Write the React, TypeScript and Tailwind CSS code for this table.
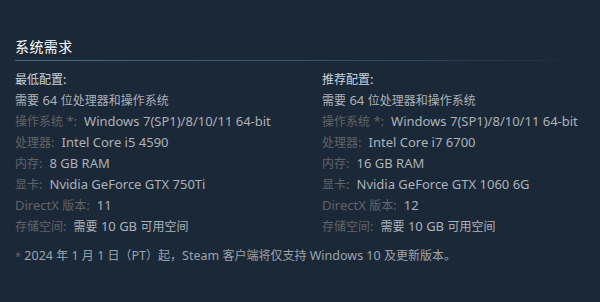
import React from "react";

type Spec = { label: string; value: string };

const minSpecs: Spec[] = [
  { label: "操作系统 *:", value: "Windows 7(SP1)/8/10/11 64-bit" },
  { label: "处理器:", value: "Intel Core i5 4590" },
  { label: "内存:", value: "8 GB RAM" },
  { label: "显卡:", value: "Nvidia GeForce GTX 750Ti" },
  { label: "DirectX 版本:", value: "11" },
  { label: "存储空间:", value: "需要 10 GB 可用空间" },
];

const recSpecs: Spec[] = [
  { label: "操作系统 *:", value: "Windows 7(SP1)/8/10/11 64-bit" },
  { label: "处理器:", value: "Intel Core i7 6700" },
  { label: "内存:", value: "16 GB RAM" },
  { label: "显卡:", value: "Nvidia GeForce GTX 1060 6G" },
  { label: "DirectX 版本:", value: "12" },
  { label: "存储空间:", value: "需要 10 GB 可用空间" },
];

// CJK glyphs render a size smaller than the Latin text, as on the store page
function Mixed({ text }: { text: string }) {
  const parts = text.split(/([\u3000-\u9fff\uff00-\uffef]+)/);
  return (
    <>
      {parts.map((p, i) =>
        i % 2 === 1 ? (
          <span key={i} className="text-[12px]">
            {p}
          </span>
        ) : (
          <React.Fragment key={i}>{p}</React.Fragment>
        )
      )}
    </>
  );
}

function Column({ title, specs }: { title: string; specs: Spec[] }) {
  return (
    <div className="flex flex-col">
      <div className="text-[#c6d4df] h-[21px] leading-[21px]">
        <Mixed text={title} />
      </div>
      <div className="text-[#acb2b8] h-[21px] leading-[21px]">
        <Mixed text="需要 64 位处理器和操作系统" />
      </div>
      {specs.map((s) => (
        <div key={s.label} className="h-[21px] leading-[21px] whitespace-nowrap">
          <span className="text-[#626366]">
            <Mixed text={s.label} />
          </span>
          <span className="ml-[7px] text-[#acb2b8]">
            <Mixed text={s.value} />
          </span>
        </div>
      ))}
    </div>
  );
}

export default function App() {
  return (
    <div
      className="w-[600px] h-[302px] bg-[#1b2838] pl-[15px] pt-[37px] text-[13px] overflow-hidden"
      style={{ fontFamily: '"Noto Sans", "Noto Sans CJK SC", sans-serif' }}
    >
      <h2 className="text-white text-[14px] leading-[20px] tracking-[0.03em]">系统需求</h2>
      <div className="mt-[3px] h-px w-[572px] bg-gradient-to-r from-[#3b6e8c] via-[#3b6e8c]/70 to-transparent" />
      <div className="mt-[8px] grid grid-cols-[307px_1fr]">
        <Column title="最低配置:" specs={minSpecs} />
        <Column title="推荐配置:" specs={recSpecs} />
      </div>
      <div className="mt-[10px] text-[#9ba3ab] text-[12.5px] leading-[18px] whitespace-nowrap">
        <span className="text-[#626366] text-[11px]">*</span>{" "}
        <Mixed text="2024 年 1 月 1 日（PT）起，Steam 客户端将仅支持 Windows 10 及更新版本。" />
      </div>
    </div>
  );
}
